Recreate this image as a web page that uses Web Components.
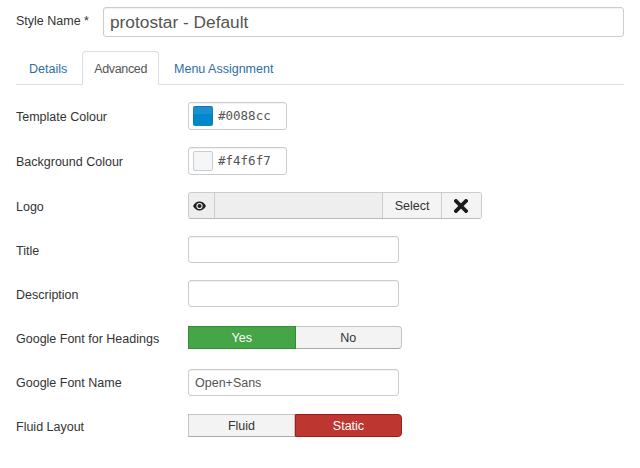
<!DOCTYPE html>
<html>
<head>
<meta charset="utf-8">
<style>
    html, body { margin: 0; background: #fff; }
    body { font: 12.5px "Liberation Sans", Arial, sans-serif; color: #333; overflow: hidden; }
</style>
</head>
<body>
<style-page>
    <title-row slot="title" label="Style Name *" value="protostar - Default"></title-row>
    <tab-bar slot="tabs">
        <tab-item>Details</tab-item>
        <tab-item active>Advanced</tab-item>
        <tab-item>Menu Assignment</tab-item>
    </tab-bar>
    <form-row label="Template Colour" height="45">
        <color-field color="#0088cc" value="#0088cc"></color-field>
    </form-row>
    <form-row label="Background Colour" height="45">
        <color-field color="#f4f6f7" value="#f4f6f7" light></color-field>
    </form-row>
    <form-row label="Logo" height="44">
        <media-field></media-field>
    </form-row>
    <form-row label="Title" height="44">
        <text-field></text-field>
    </form-row>
    <form-row label="Description" height="44">
        <text-field></text-field>
    </form-row>
    <form-row label="Google Font for Headings" height="45">
        <switch-field style="margin-top: 2px" first="Yes" second="No" on="first" tone="green"></switch-field>
    </form-row>
    <form-row label="Google Font Name" height="44" style="--label-line: 28px">
        <text-field value="Open+Sans"></text-field>
    </form-row>
    <form-row label="Fluid Layout" height="44" style="--label-line: 28px">
        <switch-field style="margin-top: 1px" first="Fluid" second="Static" on="second" tone="red"></switch-field>
    </form-row>
</style-page>

<script>
class StylePage extends HTMLElement {
    constructor() {
        super();
        this.attachShadow({mode: "open"}).innerHTML = `
            <style>
                :host { display: block; padding: 7px 16px 0; height: 461px; box-sizing: border-box; }
                #tabs { margin-top: 14px; }
                #rows { display: flex; flex-direction: column; margin-top: 17px; }
            </style>
            <slot name="title"></slot>
            <div id="tabs"><slot name="tabs"></slot></div>
            <div id="rows"><slot></slot></div>
        `;
    }
}

class TitleRow extends HTMLElement {
    constructor() {
        super();
        this.attachShadow({mode: "open"}).innerHTML = `
            <style>
                :host { display: flex; align-items: center; }
                label { width: 87px; margin-top: -2px; }
                div {
                    width: 521px; height: 30px; box-sizing: border-box;
                    border: 1px solid #ccc; border-radius: 3px;
                    padding: 0 6px; line-height: 29px;
                    font-size: 17.3px; color: #555;
                    box-shadow: inset 0 1px 1px rgba(0,0,0,.06);
                }
            </style>
            <label>${this.getAttribute("label")}</label>
            <div>${this.getAttribute("value")}</div>
        `;
    }
}

class TabBar extends HTMLElement {
    constructor() {
        super();
        this.attachShadow({mode: "open"}).innerHTML = `
            <style>
                :host { display: flex; height: 34px; box-sizing: border-box; border-bottom: 1px solid #ddd; }
            </style>
            <slot></slot>
        `;
    }
}

class TabItem extends HTMLElement {
    constructor() {
        super();
        this.attachShadow({mode: "open"}).innerHTML = `
            <style>
                :host {
                    display: block; height: 34px; box-sizing: border-box;
                    padding: 0 12px; margin-right: 2px; line-height: 34px;
                    border: 1px solid transparent; border-radius: 4px 4px 0 0;
                    color: #2a6fa8;
                }
                :host([active]) {
                    color: #555; background: #fff;
                    border-color: #ddd #ddd #fff;
                    padding: 0 11px; letter-spacing: -.35px;
                }
            </style>
            <slot></slot>
        `;
    }
}

class FormRow extends HTMLElement {
    constructor() {
        super();
        const h = this.getAttribute("height");
        this.attachShadow({mode: "open"}).innerHTML = `
            <style>
                :host { display: flex; height: ${h}px; align-items: flex-start; }
                label { width: 172px; line-height: var(--label-line, 30px); }
            </style>
            <label>${this.getAttribute("label")}</label>
            <slot></slot>
        `;
    }
}

class TextField extends HTMLElement {
    constructor() {
        super();
        this.attachShadow({mode: "open"}).innerHTML = `
            <style>
                :host {
                    display: block; width: 211px; height: 27px; box-sizing: border-box;
                    border: 1px solid #ccc; border-radius: 3px;
                    padding: 0 6px; line-height: 26px; color: #555;
                    box-shadow: inset 0 1px 1px rgba(0,0,0,.06);
                }
            </style>
            ${this.getAttribute("value") || ""}
        `;
    }
}

class ColorField extends HTMLElement {
    constructor() {
        super();
        const color = this.getAttribute("color");
        this.attachShadow({mode: "open"}).innerHTML = `
            <style>
                :host {
                    display: flex; align-items: center; gap: 5px;
                    width: 99px; height: 28px; box-sizing: border-box;
                    border: 1px solid #ccc; border-radius: 3px; padding-left: 4px;
                    box-shadow: inset 0 1px 1px rgba(0,0,0,.06);
                }
                i {
                    display: block; width: 20px; height: 20px; box-sizing: border-box;
                    border-radius: 2px; background: ${color};
                    border: 1px solid rgba(0,0,0,.08);
                }
                :host(:not([light])) i { background: linear-gradient(#1f8ecf 0 40%, #0088cc 40%); }
                :host([light]) i { border-color: #ccc; }
                span { font: 12.5px "DejaVu Sans Mono", monospace; color: #555; margin-top: -1px; }
            </style>
            <i></i><span>${this.getAttribute("value")}</span>
        `;
    }
}

class MediaField extends HTMLElement {
    constructor() {
        super();
        this.attachShadow({mode: "open"}).innerHTML = `
            <style>
                :host {
                    display: flex; width: 294px; height: 27px; box-sizing: border-box;
                    border: 1px solid #ccc; border-bottom-color: #bbb; border-radius: 3px; background: #eee;
                }
                div { display: flex; align-items: center; justify-content: center; box-sizing: border-box; }
                #eye { width: 26px; border-right: 1px solid #ccc; padding-right: 4px; }
                #path { flex: 1; }
                #select { width: 59px; border-left: 1px solid #ccc; background: #f4f4f4; }
                #clear { width: 40px; border-left: 1px solid #ccc; background: #f4f4f4; padding-right: 2px; }
            </style>
            <div id="eye">
                <svg width="13" height="10" viewBox="0 0 13 10">
                    <path fill="#222" fill-rule="evenodd" d="M0 5C1.6 2 3.8.6 6.5.6S11.4 2 13 5c-1.6 3-3.8 4.4-6.5 4.4S1.6 8 0 5zM6.5 1.9A3.1 3.1 0 1 0 6.5 8.1 3.1 3.1 0 1 0 6.5 1.9z"/>
                    <circle cx="6.5" cy="5" r="2" fill="#222"/>
                </svg>
            </div>
            <div id="path"></div>
            <div id="select">Select</div>
            <div id="clear">
                <svg width="14" height="14" viewBox="0 0 14 14">
                    <path d="M2 2L12 12M12 2L2 12" stroke="#1c1c1c" stroke-width="3.8" stroke-linecap="square"/>
                </svg>
            </div>
        `;
    }
}

class SwitchField extends HTMLElement {
    constructor() {
        super();
        const on = this.getAttribute("on");
        this.attachShadow({mode: "open"}).innerHTML = `
            <style>
                :host { display: flex; width: 214px; height: 23px; }
                div {
                    flex: 1; box-sizing: border-box; text-align: center; line-height: 22px;
                    border: 1px solid #c4c4c4; border-bottom-color: #aaa; background: #f3f3f3; color: #333;
                }
                div:first-child { border-radius: 4px 0 0 4px; border-right: 0; }
                div:last-child { border-radius: 0 4px 4px 0; border-left: 0; }
                .on { color: #fff; }
                :host([tone="green"]) .on { background: #46a546; border: 1px solid #2d8f2d; }
                :host([tone="red"]) .on { background: #bd362f; border: 1px solid #a51a14; }
            </style>
            <div class="${on === "first" ? "on" : ""}">${this.getAttribute("first")}</div>
            <div class="${on === "second" ? "on" : ""}">${this.getAttribute("second")}</div>
        `;
    }
}

customElements.define("style-page", StylePage);
customElements.define("title-row", TitleRow);
customElements.define("tab-bar", TabBar);
customElements.define("tab-item", TabItem);
customElements.define("form-row", FormRow);
customElements.define("text-field", TextField);
customElements.define("color-field", ColorField);
customElements.define("media-field", MediaField);
customElements.define("switch-field", SwitchField);
</script>
</body>
</html>
